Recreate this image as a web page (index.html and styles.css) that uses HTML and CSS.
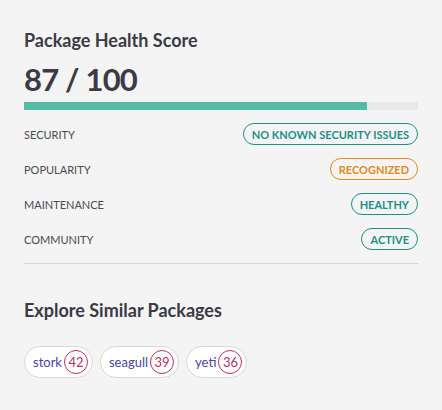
FILE: index.html
```html
<!DOCTYPE html>
<html lang="en">
<head>
    <meta charset="UTF-8">
    <meta name="viewport" content="width=device-width, initial-scale=1.0">
    <title>Package Health Score</title>
    <link rel="stylesheet" href="styles.css">
</head>
<body>
    <div class="panel">
        <h2 class="title">Package Health Score</h2>
        <div class="score">87 / 100</div>
        <div class="bar"><div class="bar-fill" style="width: 87%"></div></div>

        <ul class="metrics">
            <li class="metric">
                <span class="metric-name">Security</span>
                <span class="badge">No known security issues</span>
            </li>
            <li class="metric">
                <span class="metric-name">Popularity</span>
                <span class="badge badge-warn">Recognized</span>
            </li>
            <li class="metric">
                <span class="metric-name">Maintenance</span>
                <span class="badge">Healthy</span>
            </li>
            <li class="metric">
                <span class="metric-name">Community</span>
                <span class="badge">Active</span>
            </li>
        </ul>

        <h2 class="title similar-title">Explore Similar Packages</h2>
        <div class="chips">
            <a class="chip" href="#">stork <span class="chip-count">42</span></a>
            <a class="chip" href="#">seagull <span class="chip-count">39</span></a>
            <a class="chip" href="#">yeti <span class="chip-count">36</span></a>
        </div>
    </div>
</body>
</html>
```

FILE: styles.css
```css
body {
    margin: 0;
    background-color: #f4f4f4;
    color: #3b3a45;
    font-family: Lato, "Open Sans", sans-serif;
}

.panel {
    padding: 28px 24px 20px;
}

.title {
    margin: 0;
    font-size: 18px;
    font-weight: 700;
    line-height: 24px;
    color: #3b3a45;
}

.score {
    margin-top: 9px;
    font-size: 31px;
    font-weight: 700;
    line-height: 36px;
    letter-spacing: -0.8px;
    color: #3b3a45;
}

.bar {
    margin-top: 5px;
    height: 8px;
    background-color: #e8e8e8;
}

.bar-fill {
    height: 100%;
    background-color: #54b9a6;
}

.metrics {
    list-style: none;
    margin: 13px 0 0;
    padding: 0 0 13px;
    border-bottom: 1px solid #d6d6d9;
}

.metric {
    display: flex;
    justify-content: space-between;
    align-items: center;
    height: 22px;
    margin-bottom: 13px;
}

.metric:last-child {
    margin-bottom: 0;
}

.metric-name {
    font-size: 11px;
    text-transform: uppercase;
    color: #4a4a52;
}

.badge {
    display: inline-flex;
    align-items: center;
    height: 20px;
    padding: 0 8px;
    border: 1px solid #1d8f88;
    border-radius: 11px;
    font-size: 11px;
    font-weight: 700;
    text-transform: uppercase;
    color: #1d8f88;
}

.badge-warn {
    border-color: #e08a1e;
    color: #e08a1e;
}

.similar-title {
    margin-top: 34px;
}

.chips {
    display: flex;
    gap: 7px;
    margin-top: 24px;
}

.chip {
    display: inline-flex;
    align-items: center;
    gap: 2px;
    height: 30px;
    padding: 0 4px 0 8px;
    background-color: #fff;
    border: 1px solid #d9d9dd;
    border-radius: 16px;
    font-size: 13px;
    color: #4b45a0;
    text-decoration: none;
}

.chip-count {
    display: inline-flex;
    align-items: center;
    justify-content: center;
    width: 22px;
    height: 22px;
    border: 1px solid #b3316a;
    border-radius: 50%;
    font-size: 13px;
    color: #b3316a;
}
```
